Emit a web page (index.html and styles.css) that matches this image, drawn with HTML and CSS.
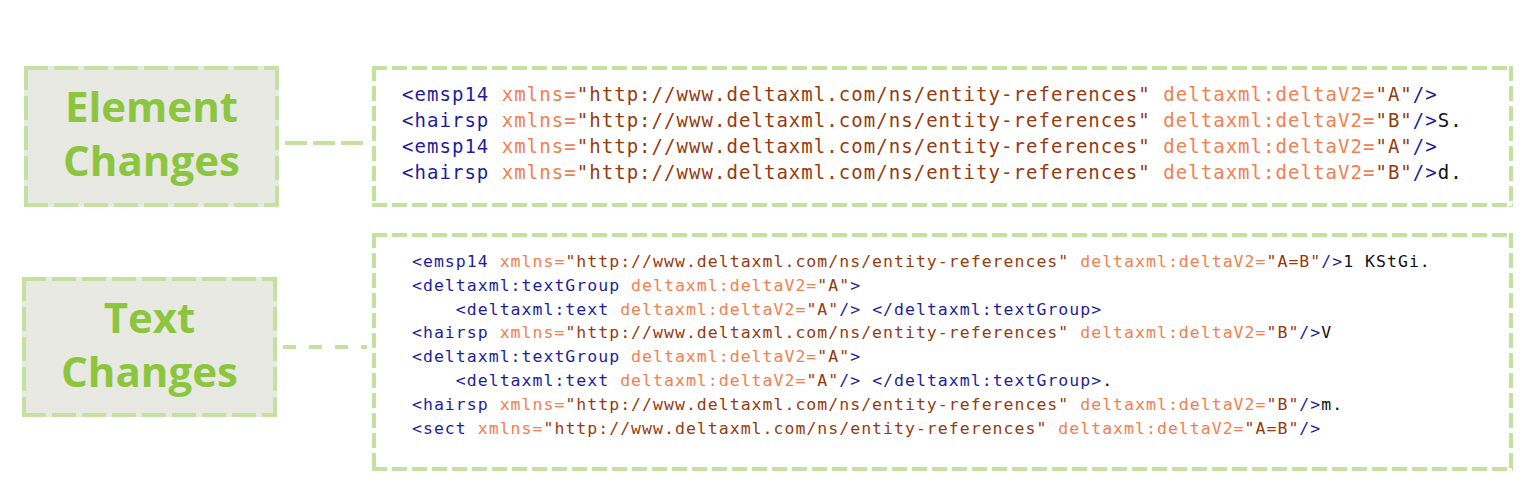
FILE: index.html
```html
<!DOCTYPE html>
<html lang="en">
<head>
<meta charset="utf-8">
<title>Element and Text Changes</title>
<link rel="stylesheet" href="styles.css">
</head>
<body>
<main class="diagram">
  <section class="row row-element">
    <div class="label label-element">Element<br>Changes</div>
    <div class="connector connector-element"></div>
    <pre class="code code-element"><span class="t">&lt;emsp14</span> <span class="a">xmlns=</span><span class="v">"http://www.deltaxml.com/ns/entity-references"</span> <span class="a">deltaxml:deltaV2=</span><span class="v">"A"</span><span class="t">/&gt;</span>
<span class="t">&lt;hairsp</span> <span class="a">xmlns=</span><span class="v">"http://www.deltaxml.com/ns/entity-references"</span> <span class="a">deltaxml:deltaV2=</span><span class="v">"B"</span><span class="t">/&gt;</span><span class="x">S.</span>
<span class="t">&lt;emsp14</span> <span class="a">xmlns=</span><span class="v">"http://www.deltaxml.com/ns/entity-references"</span> <span class="a">deltaxml:deltaV2=</span><span class="v">"A"</span><span class="t">/&gt;</span>
<span class="t">&lt;hairsp</span> <span class="a">xmlns=</span><span class="v">"http://www.deltaxml.com/ns/entity-references"</span> <span class="a">deltaxml:deltaV2=</span><span class="v">"B"</span><span class="t">/&gt;</span><span class="x">d.</span></pre>
  </section>
  <section class="row row-text">
    <div class="label label-text">Text<br>Changes</div>
    <div class="connector connector-text"></div>
    <pre class="code code-text"><span class="t">&lt;emsp14</span> <span class="a">xmlns=</span><span class="v">"http://www.deltaxml.com/ns/entity-references"</span> <span class="a">deltaxml:deltaV2=</span><span class="v">"A=B"</span><span class="t">/&gt;</span><span class="x">1 KStGi.</span>
<span class="t">&lt;deltaxml:textGroup</span> <span class="a">deltaxml:deltaV2=</span><span class="v">"A"</span><span class="t">&gt;</span>
    <span class="t">&lt;deltaxml:text</span> <span class="a">deltaxml:deltaV2=</span><span class="v">"A"</span><span class="t">/&gt;</span> <span class="t">&lt;/deltaxml:textGroup&gt;</span>
<span class="t">&lt;hairsp</span> <span class="a">xmlns=</span><span class="v">"http://www.deltaxml.com/ns/entity-references"</span> <span class="a">deltaxml:deltaV2=</span><span class="v">"B"</span><span class="t">/&gt;</span><span class="x">V</span>
<span class="t">&lt;deltaxml:textGroup</span> <span class="a">deltaxml:deltaV2=</span><span class="v">"A"</span><span class="t">&gt;</span>
    <span class="t">&lt;deltaxml:text</span> <span class="a">deltaxml:deltaV2=</span><span class="v">"A"</span><span class="t">/&gt;</span> <span class="t">&lt;/deltaxml:textGroup&gt;</span><span class="x">.</span>
<span class="t">&lt;hairsp</span> <span class="a">xmlns=</span><span class="v">"http://www.deltaxml.com/ns/entity-references"</span> <span class="a">deltaxml:deltaV2=</span><span class="v">"B"</span><span class="t">/&gt;</span><span class="x">m.</span>
<span class="t">&lt;sect</span> <span class="a">xmlns=</span><span class="v">"http://www.deltaxml.com/ns/entity-references"</span> <span class="a">deltaxml:deltaV2=</span><span class="v">"A=B"</span><span class="t">/&gt;</span></pre>
  </section>
</main>
</body>
</html>
```

FILE: styles.css
```css
html, body {
  margin: 0;
  padding: 0;
  background: #ffffff;
}

.diagram {
  display: flex;
  flex-direction: column;
  gap: 26px;
  padding-top: 66px;
  width: 1513px;
}

.row {
  display: flex;
  align-items: center;
}

/* ---------- labels ---------- */
.label {
  box-sizing: border-box;
  flex: none;
  width: 255px;
  display: flex;
  align-items: center;
  justify-content: center;
  text-align: center;
  font-family: "Open Sans", "Noto Sans", sans-serif;
  font-weight: 700;
  font-size: 42px;
  line-height: 54px;
  color: #8cc63f;
  background-color: #e8e9e2;
  background-image:
    repeating-linear-gradient(90deg, #c4e19f 0 24px, transparent 24px 30px),
    repeating-linear-gradient(90deg, #c4e19f 0 24px, transparent 24px 30px),
    repeating-linear-gradient(180deg, #c4e19f 0 24px, transparent 24px 30px),
    repeating-linear-gradient(180deg, #c4e19f 0 24px, transparent 24px 30px);
  background-size: 100% 4px, 100% 4px, 4px 100%, 4px 100%;
  background-position: left top, left bottom, left top, right top;
  background-repeat: no-repeat;
  padding-bottom: 8px;
}

.label-element {
  margin-left: 24px;
  height: 141px;
}

.label-text {
  margin-left: 22px;
  height: 140px;
  margin-bottom: 10px;
  padding-bottom: 6px;
}

/* ---------- connectors ---------- */
.connector {
  flex: 1;
  height: 4px;
  margin: 0 5px 0 6px;
}

.connector-element {
  margin-top: 13px;
  background-image: repeating-linear-gradient(90deg, #c4e19f 0 22px, transparent 22px 28px);
}

.connector-text {
  margin-bottom: 10px;
  background-image: repeating-linear-gradient(90deg, #c4e19f 0 13px, transparent 13px 26px);
}

/* ---------- code boxes ---------- */
.code {
  box-sizing: border-box;
  flex: none;
  width: 1141px;
  margin: 0;
  white-space: pre;
  font-family: "DejaVu Sans Mono", "Liberation Mono", monospace;
  color: #111111;
  background-color: #ffffff;
  background-image:
    repeating-linear-gradient(90deg, #c4e19f 0 15px, transparent 15px 20px),
    repeating-linear-gradient(90deg, #c4e19f 0 15px, transparent 15px 20px),
    repeating-linear-gradient(180deg, #c4e19f 0 15px, transparent 15px 20px),
    repeating-linear-gradient(180deg, #c4e19f 0 15px, transparent 15px 20px);
  background-size: 100% 4px, 100% 4px, 4px 100%, 4px 100%;
  background-position: left top, left bottom, left top, right top;
  background-repeat: no-repeat;
}

.code-element {
  height: 141px;
  font-size: 19px;
  letter-spacing: 1.04px;
  line-height: 26px;
  padding: 15px 26px 0 30px;
}

.code-text {
  height: 238px;
  font-size: 16.5px;
  letter-spacing: 1.02px;
  line-height: 23.8px;
  padding: 17px 20px 0 40px;
}

.t { color: #1e1e9c; }
.a { color: #f2804f; }
.v { color: #973a0e; }
.x { color: #111111; }
```
